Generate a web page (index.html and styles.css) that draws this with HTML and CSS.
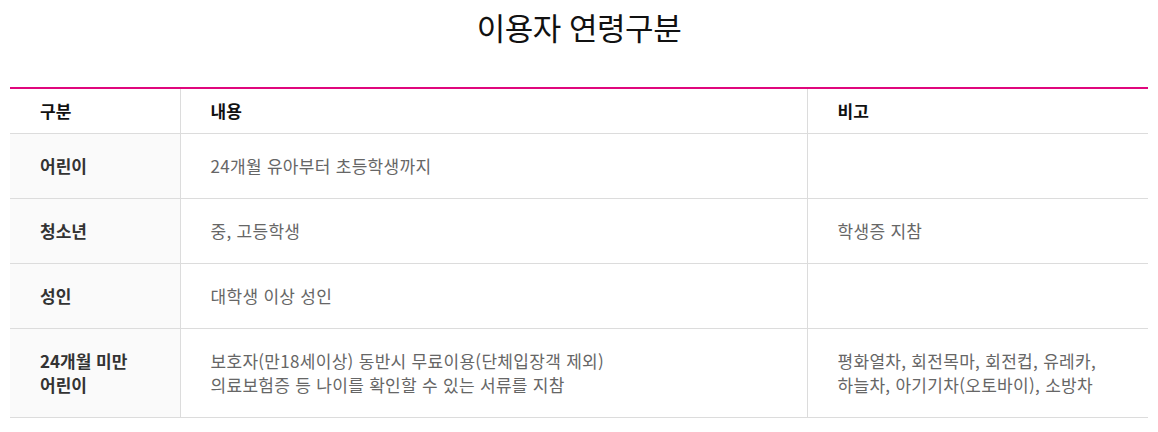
FILE: index.html
```html
<!DOCTYPE html>
<html lang="ko">
<head>
<meta charset="utf-8">
<title>이용자 연령구분</title>
<link rel="stylesheet" href="styles.css">
</head>
<body>
<div class="page">
  <h2 class="title">이용자 연령구분</h2>
  <table class="age-table">
    <colgroup>
      <col class="c1"><col class="c2"><col class="c3">
    </colgroup>
    <thead>
      <tr><th>구분</th><th>내용</th><th>비고</th></tr>
    </thead>
    <tbody>
      <tr><th>어린이</th><td>24개월 유아부터 초등학생까지</td><td></td></tr>
      <tr><th>청소년</th><td>중, 고등학생</td><td>학생증 지참</td></tr>
      <tr><th>성인</th><td>대학생 이상 성인</td><td></td></tr>
      <tr><th>24개월 미만<br>어린이</th><td>보호자(만18세이상) 동반시 무료이용(단체입장객 제외)<br>의료보험증 등 나이를 확인할 수 있는 서류를 지참</td><td>평화열차, 회전목마, 회전컵, 유레카,<br>하늘차, 아기기차(오토바이), 소방차</td></tr>
    </tbody>
  </table>
</div>
</body>
</html>
```

FILE: styles.css
```css
html, body {
  margin: 0;
  padding: 0;
  background: #fff;
}
body {
  font-family: "Noto Sans CJK KR", "Noto Sans", sans-serif;
  color: #333;
}
.page {
  padding: 0 10px;
}
.title {
  margin: 0 0 34px;
  height: 53px;
  line-height: 53px;
  font-size: 31px;
  font-weight: 400;
  color: #111;
  text-align: center;
  letter-spacing: -0.5px;
}
.age-table {
  width: 100%;
  border-collapse: collapse;
  border-top: 2px solid #e0077d;
  font-size: 17px;
  line-height: 24px;
}
.c1 { width: 170px; }
.c3 { width: 341px; }
.age-table th,
.age-table td {
  text-align: left;
  vertical-align: middle;
  border-bottom: 1px solid #dcdcdc;
  border-left: 1px solid #dcdcdc;
  padding: 20px 30px;
}
.age-table th:first-child {
  border-left: none;
}
.age-table thead th {
  padding: 10px 30px;
  font-weight: 700;
  color: #111;
  background: #fff;
}
.age-table tbody th {
  font-weight: 700;
  color: #333;
  background: #fafafa;
}
.age-table tbody td {
  color: #666;
  font-weight: 400;
  letter-spacing: 0.3px;
}
```
